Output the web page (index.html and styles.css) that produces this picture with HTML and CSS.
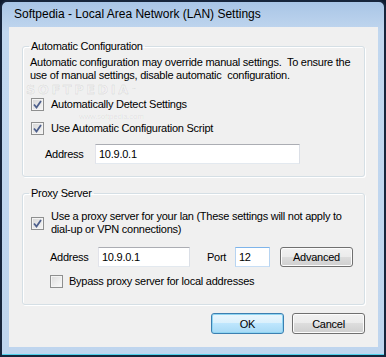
FILE: index.html
```html
<!DOCTYPE html>
<html lang="en">
<head>
  <meta charset="UTF-8" />
  <title>Softpedia - Local Area Network (LAN) Settings</title>
  <link rel="stylesheet" href="styles.css">
</head>
<body>
  <div class="window">
    <div class="titlebar">Softpedia - Local Area Network (LAN) Settings</div>
    <div class="client">
      <fieldset class="group group-auto">
        <legend>Automatic Configuration</legend>
        <div class="watermark">SOFTPEDIA<span class="tm">™</span></div>
        <div class="watermark-url">www.softpedia.com</div>
        <p class="note">Automatic configuration may override manual settings.&nbsp; To ensure the<br>use of manual settings, disable automatic&nbsp; configuration.</p>
        <label class="check check-detect">
          <span class="box"><svg width="11" height="11" viewBox="0 0 11 11"><path d="M2 5.5 L4.5 8.5 L9 2" fill="none" stroke="#4d5f8c" stroke-width="1.8"/></svg></span>
          Automatically Detect Settings
        </label>
        <label class="check check-script">
          <span class="box"><svg width="11" height="11" viewBox="0 0 11 11"><path d="M2 5.5 L4.5 8.5 L9 2" fill="none" stroke="#4d5f8c" stroke-width="1.8"/></svg></span>
          Use Automatic Configuration Script
        </label>
        <div class="row row-script">
          <span class="lbl lbl-script">Address</span>
          <span class="input input-script">10.9.0.1</span>
        </div>
      </fieldset>

      <fieldset class="group group-proxy">
        <legend>Proxy Server</legend>
        <label class="check check-proxy">
          <span class="box"><svg width="11" height="11" viewBox="0 0 11 11"><path d="M2 5.5 L4.5 8.5 L9 2" fill="none" stroke="#4d5f8c" stroke-width="1.8"/></svg></span>
          <span>Use a proxy server for your lan (These settings will not apply to<br>dial-up or VPN connections)</span>
        </label>
        <div class="row row-proxy">
          <span class="lbl lbl-proxy">Address</span>
          <span class="input input-addr">10.9.0.1</span>
          <span class="lbl lbl-port">Port</span>
          <span class="input input-port">12</span>
          <button class="btn btn-adv">Advanced</button>
        </div>
        <label class="check check-bypass">
          <span class="box empty"></span>
          Bypass proxy server for local addresses
        </label>
      </fieldset>

      <div class="actions">
        <button class="btn btn-ok">OK</button>
        <button class="btn">Cancel</button>
      </div>
    </div>
  </div>
</body>
</html>
```

FILE: styles.css
```css
body {
  margin: 0;
  background: #0e1a2e;
  font-family: 'Liberation Sans', Arial, sans-serif;
  font-size: 11px;
  color: #000;
}

.window {
  box-sizing: border-box;
  width: 386px;
  height: 357px;
  border: 2px solid #17253c;
  border-radius: 7px 7px 0 0;
  padding: 0 6px 7px 7px;
  background: linear-gradient(to bottom, #a9c5e6, #c1d7ef 30px, #bfd5ee);
  box-shadow: inset 0 -1px 0 #4fd0ea;
}

.titlebar {
  height: 25px;
  padding-left: 5px;
  font-size: 12px;
  line-height: 24px;
  color: #000;
}

.client {
  height: 320px;
  background: #f0f0f0;
  padding: 0 13px;
  box-sizing: border-box;
  overflow: hidden;
  white-space: nowrap;
  letter-spacing: -0.25px;
}

.group {
  position: relative;
  margin: 0;
  border: 1px solid #d5dfe5;
  border-radius: 3px;
  box-shadow: inset 1px 1px 0 #fff, 1px 1px 0 #fff;
  padding: 3px 7px 12px 7px;
}

.group legend {
  padding: 0 2px;
  margin-left: -1px;
  line-height: 13px;
}

.group-auto {
  margin-top: 13px;
}

.group-proxy {
  margin-top: 10px;
  padding-bottom: 15px;
}

.note {
  margin: 0;
  line-height: 13px;
}

.check {
  display: flex;
  align-items: center;
  gap: 7px;
  height: 16px;
  margin-left: 1px;
  line-height: 13px;
}

.check-detect { margin-top: 14px; }
.check-script { margin-top: 8px; }

.check-proxy {
  height: 26px;
  margin-top: 7px;
}

.check-bypass {
  margin-top: 6px;
  margin-left: 20px;
  gap: 6px;
}

.box {
  flex: none;
  box-sizing: border-box;
  width: 13px;
  height: 13px;
  border: 1px solid #8e8f8f;
  background: linear-gradient(135deg, #d6d6d6, #f6f6f6);
  box-shadow: inset 0 0 0 1px #f4f4f4;
  display: flex;
  align-items: center;
  justify-content: center;
}

.box svg {
  display: block;
}

.box.empty {
  background: linear-gradient(135deg, #dcdcdc, #fbfbfb);
}

.row {
  display: flex;
  align-items: center;
  height: 20px;
}

.row-script {
  margin-top: 8px;
  padding-left: 15px;
}

.row-proxy {
  margin-top: 11px;
  padding-left: 20px;
}

.lbl-script { width: 50px; }
.lbl-proxy { width: 48px; }

.lbl-port {
  width: 28px;
  margin-left: 17px;
}

.input {
  box-sizing: border-box;
  height: 20px;
  line-height: 18px;
  padding-left: 3px;
  background: #fff;
  border: 1px solid;
  border-color: #abadb3 #dbdfe6 #e3e9ef #e2e3ea;
}

.input-script { width: 205px; }
.input-addr { width: 92px; }

.input-port {
  width: 35px;
  border-color: #7eb4ea #b7d4f1 #c7def5 #b7d4f1;
}

.btn {
  box-sizing: border-box;
  width: 73px;
  height: 21px;
  padding: 0;
  font-family: 'Liberation Sans', Arial, sans-serif;
  font-size: 11px;
  letter-spacing: -0.25px;
  color: #000;
  border: 1px solid #707070;
  border-radius: 3px;
  background: linear-gradient(to bottom, #f2f2f2, #ebebeb 50%, #dddddd 50%, #cfcfcf);
  box-shadow: inset 0 0 0 1px #fcfcfc;
}

.btn-adv {
  height: 20px;
  margin-left: 10px;
}

.btn-ok {
  border-color: #3c7fb1;
  box-shadow: inset 0 0 0 1px #8fd5f2;
  background: linear-gradient(to bottom, #eaf6fd, #d9f0fc 50%, #bee6fd 50%, #a7d9f5);
}

.actions {
  display: flex;
  justify-content: flex-end;
  gap: 8px;
  margin-top: 8px;
}

/* faint site watermark */
.watermark {
  position: absolute;
  left: 3px;
  top: 32px;
  font-family: 'DejaVu Sans', sans-serif;
  font-size: 13px;
  line-height: 10px;
  font-weight: bold;
  letter-spacing: 2.5px;
  color: transparent;
  -webkit-text-stroke: 1px rgba(0, 0, 0, 0.07);
}

.watermark .tm {
  font-size: 6px;
  vertical-align: top;
  -webkit-text-stroke: 0;
  color: rgba(0, 0, 0, 0.1);
}

.watermark-url {
  position: absolute;
  left: 56px;
  top: 60px;
  font-size: 8px;
  line-height: 8px;
  color: rgba(0, 0, 0, 0.07);
}
```
